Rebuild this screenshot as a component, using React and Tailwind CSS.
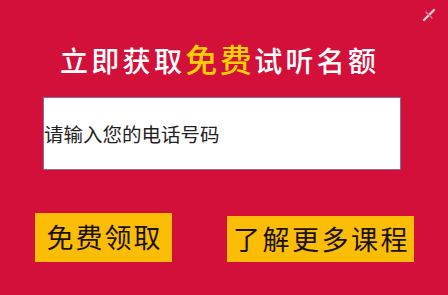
import React from "react";

const cjk = { fontFamily: '"Noto Sans CJK SC", "Noto Sans", sans-serif' };

function CloseIcon() {
  return (
    <svg width="14" height="14" viewBox="0 0 14 14" className="absolute right-[12px] top-[8px]">
      <path d="M2 12 L12 2" stroke="#f4c9d2" strokeWidth="2.4" strokeLinecap="round" />
      <path d="M4 4 L10 10" stroke="#b88a96" strokeWidth="1.4" strokeLinecap="round" />
    </svg>
  );
}

export default function App() {
  return (
    <div className="relative w-[448px] h-[295px] bg-[#d3103a] overflow-hidden" style={cjk}>
      <CloseIcon />
      <div className="pt-[38px] pl-[60px] h-[97px] flex items-start">
        <h1 className="text-[28px] leading-[40px] font-medium text-white tracking-[3.3px] whitespace-nowrap">
          立即获取<span className="text-[#ffd000] text-[32px] tracking-[2.5px]">免费</span>试听名额
        </h1>
      </div>
      <div className="ml-[43px] w-[358px] h-[73px] bg-white border border-[#8a6a98] flex items-center">
        <input
          className="outline-none w-full bg-transparent text-[19.5px] text-[#222] placeholder:text-[#222] pl-0"
          style={cjk}
          type="text"
          placeholder="请输入您的电话号码"
          readOnly
        />
      </div>
      <div className="flex items-start pt-[43px] pl-[35px]">
        <button className="w-[137px] h-[49px] bg-[#fcbd07] text-[27px] text-[#1a1208] tracking-[2px] pl-[2px] flex items-center justify-center" style={cjk}>
          免费领取
        </button>
        <button className="ml-[55px] mt-[3px] w-[187px] h-[46px] bg-[#fcbd07] text-[27px] text-[#1a1208] tracking-[2.5px] pl-[2px] flex items-center justify-center" style={cjk}>
          了解更多课程
        </button>
      </div>
    </div>
  );
}
